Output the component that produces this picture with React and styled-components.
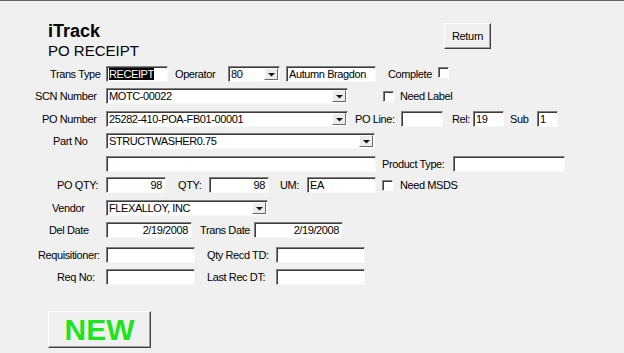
import styled, { createGlobalStyle } from "styled-components";

const GlobalStyle = createGlobalStyle`
  html, body {
    margin: 0;
    padding: 0;
    background: #f0f0f0;
  }
`;

const Page = styled.div`
  width: 624px;
  height: 353px;
  box-sizing: border-box;
  border-top: 1px solid #666;
  background: #f0f0f0;
  font-family: "Liberation Sans", Arial, sans-serif;
  font-size: 11px;
  letter-spacing: -0.4px;
  color: #000;
  display: flex;
  flex-direction: column;
  overflow: hidden;
`;

const Header = styled.div`
  height: 65px;
  display: flex;
  justify-content: space-between;
  align-items: flex-start;
`;

const TitleBlock = styled.div`
  padding: 20px 0 0 48px;
  letter-spacing: 0;
`;

const AppName = styled.div`
  font-size: 18px;
  font-weight: bold;
  line-height: 21px;
`;

const ScreenName = styled.div`
  font-size: 15px;
  line-height: 17px;
`;

const RaisedButton = styled.button`
  box-sizing: border-box;
  width: ${(p) => p.w}px;
  height: ${(p) => p.h}px;
  margin: ${(p) => p.m};
  padding: 0;
  background: #f0f0f0;
  border: 1px solid;
  border-color: #fff #404040 #404040 #fff;
  box-shadow: inset -1px -1px 0 #a0a0a0;
  font-family: inherit;
  font-size: 11px;
  letter-spacing: -0.3px;
  color: #000;
  display: flex;
  align-items: center;
  justify-content: center;
`;

const NewText = styled.span`
  font-size: 30px;
  font-weight: bold;
  color: #1ee41e;
  letter-spacing: 0;
`;

const Form = styled.div`
  display: flex;
  flex-direction: column;
`;

const Row = styled.div`
  display: flex;
  align-items: center;
  height: 16px;
  margin-top: ${(p) => p.mt || 0}px;
  white-space: nowrap;
`;

const Lead = styled.div`
  box-sizing: border-box;
  width: 106px;
  flex: none;
  padding-left: ${(p) => p.pl || 0}px;
  line-height: 16px;
`;

const Label = styled.div`
  flex: none;
  width: ${(p) => (p.w ? p.w + "px" : "auto")};
  margin-left: ${(p) => p.ml || 0}px;
  line-height: 16px;
`;

const Field = styled.div`
  box-sizing: border-box;
  position: relative;
  flex: none;
  width: ${(p) => p.w}px;
  height: 16px;
  margin-left: ${(p) => p.ml || 0}px;
  background: #fff;
  border: 1px solid;
  border-color: #808080 #f8f8f8 #f8f8f8 #808080;
  box-shadow: inset 1px 1px 0 #3c3c3c;
  padding: 0 ${(p) => (p.right ? 3 : 2)}px 0 2px;
  text-align: ${(p) => (p.right ? "right" : "left")};
  line-height: 14px;
  overflow: hidden;
`;

const Selected = styled.span`
  background: #000;
  color: #fff;
`;

const DropButton = styled.div`
  position: absolute;
  top: 1px;
  right: 1px;
  width: 14px;
  height: 12px;
  box-sizing: border-box;
  background: #ececec;
  border: 1px solid;
  border-color: #fff #6a6a6a #6a6a6a #fff;
  display: flex;
  align-items: center;
  justify-content: center;
`;

const Check = styled.div`
  box-sizing: border-box;
  flex: none;
  width: 11px;
  height: 11px;
  margin-left: ${(p) => p.ml || 0}px;
  margin-top: ${(p) => p.mt || 0}px;
  align-self: ${(p) => (p.top ? "flex-start" : "center")};
  background: #fff;
  border: 1px solid;
  border-color: #808080 #fff #fff #808080;
  box-shadow: inset 1px 1px 0 #404040;
`;

const Footer = styled.div`
  margin-top: 26px;
  padding-left: 48px;
`;

function Combo({ w, children }) {
  return (
    <Field w={w}>
      {children}
      <DropButton>
        <svg width="7" height="5" viewBox="0 0 7 5">
          <polygon points="0,1 7,1 3.5,4.5" fill="#111" />
        </svg>
      </DropButton>
    </Field>
  );
}

export default function App() {
  return (
    <Page>
      <GlobalStyle />
      <Header>
        <TitleBlock>
          <AppName>iTrack</AppName>
          <ScreenName>PO RECEIPT</ScreenName>
        </TitleBlock>
        <RaisedButton w={47} h={26} m="22px 133px 0 0">
          Return
        </RaisedButton>
      </Header>

      <Form>
        <Row>
          <Lead pl={50}>Trans Type</Lead>
          <Field w={62}>
            <Selected>RECEIPT</Selected>
          </Field>
          <Label ml={7} w={53}>Operator</Label>
          <Combo w={52}>80</Combo>
          <Field ml={6} w={90}>Autumn Bragdon</Field>
          <Label ml={12} w={50}>Complete</Label>
          <Check top mt={1} />
        </Row>

        <Row mt={6}>
          <Lead pl={35}>SCN Number</Lead>
          <Combo w={242}>MOTC-00022</Combo>
          <Check ml={35} />
          <Label ml={6}>Need Label</Label>
        </Row>

        <Row mt={7}>
          <Lead pl={42}>PO Number</Lead>
          <Combo w={242}>25282-410-POA-FB01-00001</Combo>
          <Label ml={7} w={46}>PO Line:</Label>
          <Field w={42} />
          <Label ml={9} w={21}>Rel:</Label>
          <Field w={31}>19</Field>
          <Label ml={6} w={27}>Sub</Label>
          <Field w={21}>1</Field>
        </Row>

        <Row mt={6}>
          <Lead pl={53}>Part No</Lead>
          <Combo w={269}>STRUCTWASHER0.75</Combo>
        </Row>

        <Row mt={7}>
          <Lead />
          <Field w={270} />
          <Label ml={6} w={71}>Product Type:</Label>
          <Field w={112} />
        </Row>

        <Row mt={5}>
          <Lead pl={57}>PO QTY:</Lead>
          <Field w={60} right>98</Field>
          <Label ml={12} w={31}>QTY:</Label>
          <Field w={60} right>98</Field>
          <Label ml={11} w={27}>UM:</Label>
          <Field w={69}>EA</Field>
          <Check ml={6} />
          <Label ml={7}>Need MSDS</Label>
        </Row>

        <Row mt={7}>
          <Lead pl={52}>Vendor</Lead>
          <Combo w={162}>FLEXALLOY, INC</Combo>
        </Row>

        <Row mt={6}>
          <Lead pl={49}>Del Date</Lead>
          <Field w={86} right>2/19/2008</Field>
          <Label ml={8} w={54}>Trans Date</Label>
          <Field w={89} right>2/19/2008</Field>
        </Row>

        <Row mt={9}>
          <Lead pl={38}>Requisitioner:</Lead>
          <Field w={89} />
          <Label ml={12} w={69}>Qty Recd TD:</Label>
          <Field w={89} />
        </Row>

        <Row mt={6}>
          <Lead pl={57}>Req No:</Lead>
          <Field w={89} />
          <Label ml={12} w={69}>Last Rec DT:</Label>
          <Field w={89} />
        </Row>
      </Form>

      <Footer>
        <RaisedButton w={103} h={37} m="0">
          <NewText>NEW</NewText>
        </RaisedButton>
      </Footer>
    </Page>
  );
}
